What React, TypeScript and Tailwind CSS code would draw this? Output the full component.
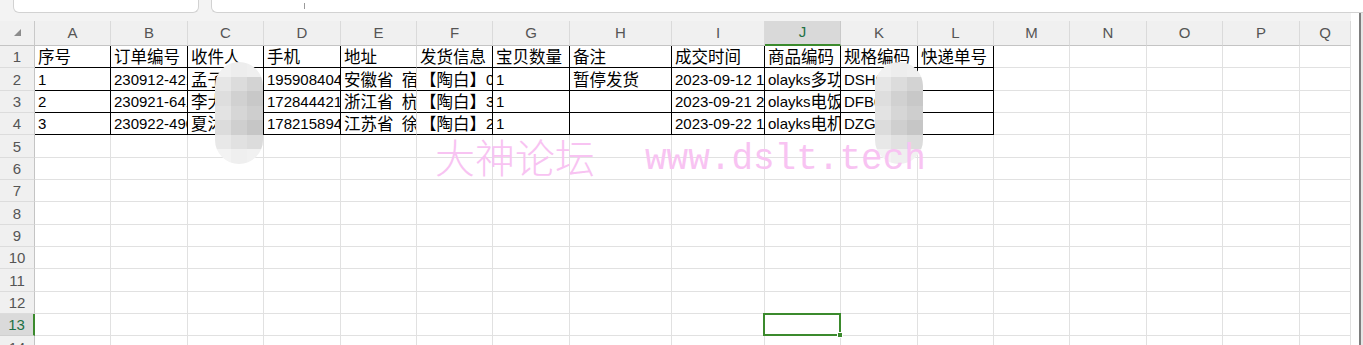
import React from 'react'

const COLS = ['A', 'B', 'C', 'D', 'E', 'F', 'G', 'H', 'I', 'J', 'K', 'L', 'M', 'N', 'O', 'P', 'Q']
const GRID = 'grid grid-cols-[35px_76px_77px_76px_77px_76px_76px_77px_102px_93px_76px_77px_76px_76px_77px_76px_77px_51px]'
const ROW_H = ['h-[22px]', 'h-[23px]', 'h-[22px]', 'h-[22px]', 'h-[23px]', 'h-[22px]', 'h-[22px]', 'h-[23px]', 'h-[22px]', 'h-[22px]', 'h-[23px]', 'h-[22px]', 'h-[22px]', 'h-[23px]']

const DATA: string[][] = [
  ['序号', '订单编号', '收件人', '手机', '地址', '发货信息', '宝贝数量', '备注', '成交时间', '商品编码', '规格编码', '快递单号'],
  ['1', '230912-4218', '孟子', '19590840412', '安徽省  宿州市', '【陶白】01', '1', '暂停发货', '2023-09-12 15:20', 'olayks多功能', 'DSH0', ''],
  ['2', '230921-6412', '李大', '17284442133', '浙江省  杭州市', '【陶白】31', '1', '', '2023-09-21 20:11', 'olayks电饭煲', 'DFB0', ''],
  ['3', '230922-4907', '夏沐', '17821589456', '江苏省  徐州市', '【陶白】21', '1', '', '2023-09-22 10:45', 'olayks电机', 'DZG0', ''],
]

const BLOB_COLORS = [
  ['bg-[#f1f1f1]', 'bg-[#ededed]', 'bg-[#efefef]'],
  ['bg-[#e6e6e6]', 'bg-[#dcdcdc]', 'bg-[#d3d3d3]'],
  ['bg-[#dedede]', 'bg-[#d1d1d1]', 'bg-[#c8c8c8]'],
  ['bg-[#e3e3e3]', 'bg-[#d6d6d6]', 'bg-[#cecece]'],
  ['bg-[#dcdcdc]', 'bg-[#cfcfcf]', 'bg-[#c6c6c6]'],
  ['bg-[#e8e8e8]', 'bg-[#e1e1e1]', 'bg-[#dcdcdc]'],
  ['bg-[#f3f3f3]', 'bg-[#efefef]', 'bg-[#f1f1f1]'],
]

// CJK runs are set a bit larger than the latin text, like the sheet's font does
function Rich({ text }: { text: string }) {
  const parts = text.split(/([\u3000-\u303f\u3400-\u9fff\uff00-\uffef]+)/)
  return (
    <>
      {parts.map((p, i) =>
        /[\u3000-\u303f\u3400-\u9fff\uff00-\uffef]/.test(p) ? (
          <span key={i} className="text-[16.5px]">{p}</span>
        ) : (
          <span key={i}>{p}</span>
        )
      )}
    </>
  )
}

function Blob({ className }: { className: string }) {
  return (
    <div className={`absolute w-[48px] h-[102px] rounded-[24px] overflow-hidden grid grid-cols-3 grid-rows-7 ${className}`}>
      {BLOB_COLORS.flat().map((c, i) => (
        <div key={i} className={c} />
      ))}
    </div>
  )
}

function HeaderRow() {
  return (
    <div className={`${GRID} h-[25px] bg-[#f0f0f0]`}>
      <div className="flex items-end justify-end pr-[13px] pb-[9px] border-r border-b border-r-[#c9c9c9] border-b-[#c4c4c4]">
        <svg width="7" height="7" viewBox="0 0 7 7">
          <polygon points="7,0 7,7 0,7" fill="#8c8c8c" />
        </svg>
      </div>
      {COLS.map((c) =>
        c === 'J' ? (
          <div
            key={c}
            className="flex items-center justify-center bg-[#d9d9d9] text-[#1e7145] border-r border-r-[#c9c9c9] border-b-2 border-b-[#3b8a2d] text-[15px]"
          >
            {c}
          </div>
        ) : (
          <div
            key={c}
            className="flex items-center justify-center text-[#555555] border-r border-b border-r-[#dadada] border-b-[#c4c4c4] text-[15px]"
          >
            {c}
          </div>
        )
      )}
    </div>
  )
}

function SheetRow({ index }: { index: number }) {
  const data = DATA[index]
  const selected = index === 12
  return (
    <div className={`${GRID} ${ROW_H[index]}`}>
      {selected ? (
        <div className="flex items-end justify-center pb-[1px] leading-[18px] bg-[#dadada] text-[#1e7145] border-r-2 border-r-[#3b8a2d] border-b border-b-[#d0d0d0] text-[15px]">
          {index + 1}
        </div>
      ) : (
        <div className="flex items-end justify-center pb-[1px] leading-[18px] bg-[#f0f0f0] text-[#555555] border-r border-b border-r-[#c4c4c4] border-b-[#dcdcdc] text-[15px]">
          {index + 1}
        </div>
      )}
      {COLS.map((c, ci) => {
        if (data && ci < 12) {
          const right = ci === 4 ? 'border-r-[#d6d6d6]' : 'border-r-black'
          return (
            <div
              key={c}
              className={`flex items-end pb-[1px] pl-[3px] leading-[18px] overflow-hidden whitespace-pre text-black text-[15px] border-r border-b border-b-black ${right}`}
            >
              <Rich text={data[ci]} />
            </div>
          )
        }
        if (selected && c === 'J') {
          return (
            <div key={c} className="relative border-r border-b border-r-[#e1e1e1] border-b-[#e1e1e1]">
              <div className="absolute -left-[2px] -top-[1px] -right-[1px] -bottom-[1px] border-2 border-[#3b8a2d]" />
              <div className="absolute -right-[3px] -bottom-[3px] w-[6px] h-[6px] bg-[#3b8a2d] border border-white" />
            </div>
          )
        }
        return <div key={c} className="border-r border-b border-r-[#e1e1e1] border-b-[#e1e1e1]" />
      })}
    </div>
  )
}

export default function App() {
  return (
    <div className="relative w-[1363px] h-[345px] overflow-hidden bg-white font-['Liberation_Sans','Noto_Sans_CJK_SC',sans-serif]">
      <div className="flex">
        <div className="w-[1351px]">
          <div className="flex h-[21px] bg-[#f3f3f3]">
            <div className="ml-[13px] w-[186px] h-[13px] bg-white border border-t-0 border-[#d2d2d2] rounded-b-[6px]" />
            <div className="ml-[12px] flex-1 h-[13px] bg-white border border-t-0 border-r-0 border-[#d2d2d2] rounded-bl-[6px] flex items-start">
              <div className="ml-[92px] mt-[3px] w-[1px] h-[6px] bg-[#9a9a9a]" />
            </div>
          </div>
          <HeaderRow />
          {ROW_H.map((_, i) => (
            <SheetRow key={i} index={i} />
          ))}
        </div>
        <div className="w-[12px] flex flex-col">
          <div className="h-[13px] bg-white border-b border-[#d2d2d2]" />
          <div className="flex flex-1">
            <div className="w-[8px] bg-white" />
            <div className="w-[2px] bg-[#7d7d7d]" />
            <div className="w-[2px] bg-[#e6e6e6]" />
          </div>
        </div>
      </div>

      <Blob className="left-[215px] top-[62px]" />
      <Blob className="left-[875px] top-[62px]" />

      <div className="absolute left-[435px] top-[136px] text-[40px] leading-none font-light text-[#f8c3f2] font-['Noto_Sans_CJK_SC',sans-serif] whitespace-nowrap">
        大神论坛
      </div>
      <div className="absolute left-[645px] top-[142px] text-[36px] leading-none text-[#f8c3f2] font-['Liberation_Mono',monospace] whitespace-nowrap">
        www.dslt.tech
      </div>
    </div>
  )
}
